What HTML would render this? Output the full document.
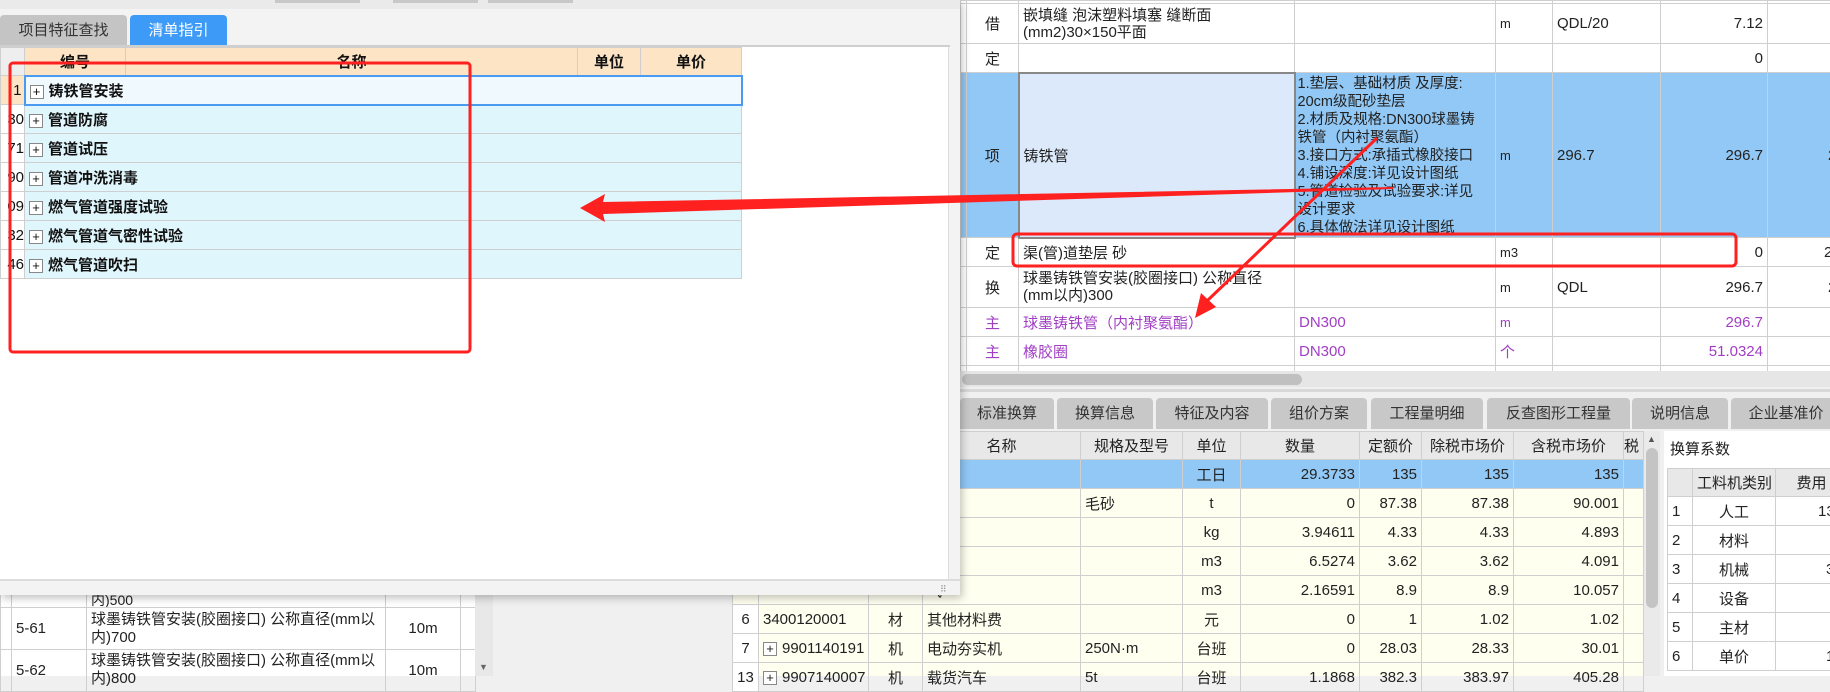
<!DOCTYPE html>
<html><head><meta charset="utf-8"><style>
*{box-sizing:border-box;margin:0;padding:0}
body{width:1830px;height:676px;overflow:hidden;position:relative;background:#f0f0f0;font-family:"Liberation Sans","Noto Sans CJK SC",sans-serif;font-size:15px;color:#222}
.a{position:absolute}
table{border-collapse:collapse;table-layout:fixed;position:absolute}
td{border:1px solid #cfcfcf;padding:0 4px;white-space:nowrap;overflow:hidden;vertical-align:middle}
.r{text-align:right}.c{text-align:center}
.p{color:#a13ec4}
.pl{display:inline-block;width:14px;height:14px;border:1px solid #888;font-size:13px;line-height:11px;text-align:center;background:#fff;vertical-align:middle;margin-right:5px}
</style></head><body>

<!-- top right table -->
<div class="a" style="left:960px;top:0;width:870px;height:372px;background:#fff"></div>
<table style="left:960px;top:0;width:877px">
<colgroup><col style="width:6px"><col style="width:52px"><col style="width:276px"><col style="width:201px"><col style="width:57px"><col style="width:108px"><col style="width:107px"><col style="width:70px"></colgroup>
<tr style="height:3px"><td></td><td></td><td></td><td></td><td></td><td></td><td></td><td></td></tr>
<tr style="height:40px"><td></td><td class="c">借</td><td style="white-space:normal;line-height:17px">嵌填缝 泡沫塑料填塞 缝断面(mm2)30×150平面</td><td></td><td style="font-size:13px">m</td><td>QDL/20</td><td class="r">7.12</td><td></td></tr>
<tr style="height:29px"><td></td><td class="c">定</td><td></td><td></td><td></td><td></td><td class="r">0</td><td></td></tr>
<tr style="height:164px;background:#92c8f5"><td></td><td class="c">项</td><td style="background:#dce9fb;border:2px solid #888">铸铁管</td><td style="white-space:normal;line-height:18px;padding:0 2px;font-size:14.5px;vertical-align:top;padding-top:2px">1.垫层、基础材质 及厚度:<br>20cm级配砂垫层<br>2.材质及规格:DN300球墨铸<br>铁管（内衬聚氨酯）<br>3.接口方式:承插式橡胶接口<br>4.铺设深度:详见设计图纸<br>5.管道检验及试验要求:详见<br>设计要求<br>6.具体做法详见设计图纸</td><td style="font-size:13px">m</td><td>296.7</td><td class="r">296.7</td><td class="r" style="text-align:left;padding-left:60px">2</td></tr>
<tr style="height:29px"><td></td><td class="c">定</td><td>渠(管)道垫层 砂</td><td></td><td style="font-size:13px">m3</td><td></td><td class="r">0</td><td style="padding-left:56px">20</td></tr>
<tr style="height:41px"><td></td><td class="c">换</td><td style="white-space:normal;line-height:17px">球墨铸铁管安装(胶圈接口) 公称直径(mm以内)300</td><td></td><td style="font-size:13px">m</td><td>QDL</td><td class="r">296.7</td><td style="padding-left:60px">2</td></tr>
<tr style="height:29px" class="p"><td></td><td class="c">主</td><td>球墨铸铁管（内衬聚氨酯）</td><td>DN300</td><td style="font-size:13px">m</td><td></td><td class="r">296.7</td><td></td></tr>
<tr style="height:29px" class="p"><td></td><td class="c">主</td><td>橡胶圈</td><td>DN300</td><td>个</td><td></td><td class="r">51.0324</td><td></td></tr>
<tr style="height:6px"><td></td><td></td><td></td><td></td><td></td><td></td><td></td><td></td></tr>
</table>
<div class="a" style="left:960px;top:371px;width:870px;height:16px;background:#e6e6e6"></div>
<div class="a" style="left:962px;top:374px;width:340px;height:11px;background:#c0c0c0;border-radius:6px"></div>
<div class="a" style="left:960px;top:389px;width:870px;height:3px;background:#d8d8d8"></div>

<!-- bottom tabs -->
<div class="a" style="left:960px;top:398px;width:870px;height:31px;color:#333;font-size:15px">
<div class="a" style="left:0;width:94px;height:31px;background:#c8c8c8;border-radius:4px 4px 0 0;text-align:center;line-height:31px">标准换算</div>
<div class="a" style="left:97px;width:96px;height:31px;background:#c8c8c8;border-radius:4px 4px 0 0;text-align:center;line-height:31px">换算信息</div>
<div class="a" style="left:196px;width:112px;height:31px;background:#c8c8c8;border-radius:4px 4px 0 0;text-align:center;line-height:31px">特征及内容</div>
<div class="a" style="left:311px;width:96px;height:31px;background:#c8c8c8;border-radius:4px 4px 0 0;text-align:center;line-height:31px">组价方案</div>
<div class="a" style="left:411px;width:112px;height:31px;background:#c8c8c8;border-radius:4px 4px 0 0;text-align:center;line-height:31px">工程量明细</div>
<div class="a" style="left:527px;width:143px;height:31px;background:#c8c8c8;border-radius:4px 4px 0 0;text-align:center;line-height:31px">反查图形工程量</div>
<div class="a" style="left:672px;width:96px;height:31px;background:#c8c8c8;border-radius:4px 4px 0 0;text-align:center;line-height:31px">说明信息</div>
<div class="a" style="left:771px;width:110px;height:31px;background:#c8c8c8;border-radius:4px 4px 0 0;text-align:center;line-height:31px">企业基准价</div>
</div>

<!-- bottom table -->
<div class="a" style="left:732px;top:431px;width:928px;height:245px;background:#fffff0"></div>
<table style="left:732px;top:431px;width:911px">
<colgroup><col style="width:26px"><col style="width:110px"><col style="width:54px"><col style="width:158px"><col style="width:102px"><col style="width:58px"><col style="width:119px"><col style="width:62px"><col style="width:92px"><col style="width:110px"><col style="width:20px"></colgroup>
<tr style="height:28px;background:#e8e8e8"><td></td><td></td><td></td><td class="c">名称</td><td class="c">规格及型号</td><td class="c">单位</td><td class="c">数量</td><td class="c" style="padding:0">定额价</td><td class="c" style="padding:0">除税市场价</td><td class="c">含税市场价</td><td style="padding:0">税</td></tr>
<tr style="height:29px;background:#92c8f5"><td></td><td></td><td></td><td>人工</td><td></td><td class="c">工日</td><td class="r">29.3733</td><td class="r">135</td><td class="r">135</td><td class="r">135</td><td></td></tr>
<tr style="height:29px"><td></td><td></td><td></td><td></td><td>毛砂</td><td class="c">t</td><td class="r">0</td><td class="r">87.38</td><td class="r">87.38</td><td class="r">90.001</td><td></td></tr>
<tr style="height:29px"><td></td><td></td><td></td><td>油</td><td></td><td class="c">kg</td><td class="r">3.94611</td><td class="r">4.33</td><td class="r">4.33</td><td class="r">4.893</td><td></td></tr>
<tr style="height:29px"><td></td><td></td><td></td><td></td><td></td><td class="c">m3</td><td class="r">6.5274</td><td class="r">3.62</td><td class="r">3.62</td><td class="r">4.091</td><td></td></tr>
<tr style="height:29px"><td></td><td></td><td></td><td>气</td><td></td><td class="c">m3</td><td class="r">2.16591</td><td class="r">8.9</td><td class="r">8.9</td><td class="r">10.057</td><td></td></tr>
<tr style="height:29px"><td class="c" style="background:#fff;padding:0">6</td><td>3400120001</td><td class="c">材</td><td>其他材料费</td><td></td><td class="c">元</td><td class="r">0</td><td class="r">1</td><td class="r">1.02</td><td class="r">1.02</td><td></td></tr>
<tr style="height:29px"><td class="c" style="background:#fff;padding:0">7</td><td><span class="pl">+</span>9901140191</td><td class="c">机</td><td>电动夯实机</td><td>250N·m</td><td class="c">台班</td><td class="r">0</td><td class="r">28.03</td><td class="r">28.33</td><td class="r">30.01</td><td></td></tr>
<tr style="height:29px"><td class="c" style="background:#fff;padding:0">13</td><td><span class="pl">+</span>9907140007</td><td class="c">机</td><td>载货汽车</td><td>5t</td><td class="c">台班</td><td class="r">1.1868</td><td class="r">382.3</td><td class="r">383.97</td><td class="r">405.28</td><td></td></tr>
</table>
<div class="a" style="left:1644px;top:431px;width:16px;height:245px;background:#eaeaea"></div>
<div class="a" style="left:1646px;top:448px;width:12px;height:160px;background:#c4c4c4;border-radius:6px"></div>
<div class="a" style="left:1647px;top:434px;font-size:9px;color:#555">▲</div>

<!-- right panel -->
<div class="a" style="left:1664px;top:431px;width:166px;height:245px;background:#fff"></div>
<div class="a" style="left:1670px;top:438px;font-size:15px">换算系数</div>
<table style="left:1667px;top:468px;width:180px">
<colgroup><col style="width:25px"><col style="width:83px"><col style="width:72px"></colgroup>
<tr style="height:28px;background:#e8e8e8"><td></td><td class="c">工料机类别</td><td class="c">费用</td></tr>
<tr style="height:29px"><td>1</td><td class="c">人工</td><td class="r" style="text-align:left;padding-left:42px">13.</td></tr>
<tr style="height:29px"><td>2</td><td class="c">材料</td><td style="padding-left:58px">0</td></tr>
<tr style="height:29px"><td>3</td><td class="c">机械</td><td style="padding-left:50px">3.</td></tr>
<tr style="height:29px"><td>4</td><td class="c">设备</td><td></td></tr>
<tr style="height:29px"><td>5</td><td class="c">主材</td><td></td></tr>
<tr style="height:29px"><td>6</td><td class="c">单价</td><td style="padding-left:50px">17</td></tr>
</table>

<!-- bottom-left table under popup -->
<div class="a" style="left:0;top:595px;width:493px;height:81px;background:#fff"></div>
<table style="left:0;top:590px;width:475px">
<colgroup><col style="width:11px"><col style="width:75px"><col style="width:299px"><col style="width:75px"><col style="width:15px"></colgroup>
<tr style="height:17px"><td></td><td></td><td style="font-size:14px;vertical-align:bottom;line-height:14px">内)500</td><td></td><td></td></tr>
<tr style="height:42px"><td></td><td>5-61</td><td style="white-space:normal;line-height:18px">球墨铸铁管安装(胶圈接口) 公称直径(mm以内)700</td><td class="c">10m</td><td></td></tr>
<tr style="height:42px"><td></td><td>5-62</td><td style="white-space:normal;line-height:18px;vertical-align:top;padding-top:2px">球墨铸铁管安装(胶圈接口) 公称直径(mm以内)800</td><td class="c">10m</td><td></td></tr>
</table>
<div class="a" style="left:475px;top:595px;width:18px;height:81px;background:#e8e8e8"></div>
<div class="a" style="left:479px;top:662px;font-size:9px;color:#666">▼</div>

<!-- popup -->
<div class="a" style="left:0;top:0;width:960px;height:595px;background:#f3f3f3;box-shadow:2px 3px 8px rgba(0,0,0,.25)">
 <div class="a" style="left:0;top:0;width:960px;height:9px;background:#eaeaea"></div>
 <div class="a" style="left:275px;top:0;width:85px;height:3px;background:#c8c8c8"></div>
 <div class="a" style="left:393px;top:0;width:85px;height:3px;background:#c8c8c8"></div>
 <div class="a" style="left:488px;top:0;width:85px;height:3px;background:#c8c8c8"></div>
 <div class="a" style="left:0;top:15px;width:127px;height:31px;background:#c4c4c4;border-radius:4px 4px 0 0;text-align:center;line-height:31px;color:#333">项目特征查找</div>
 <div class="a" style="left:130px;top:15px;width:97px;height:31px;background:#3d9bf7;border-radius:4px 4px 0 0;text-align:center;line-height:31px;color:#fff">清单指引</div>
 <div class="a" style="left:0;top:45px;width:950px;height:2px;background:#cfcfcf"></div>
 <div class="a" style="left:0;top:47px;width:949px;height:532px;background:#fff;border-right:1px solid #ddd"></div>
 <div class="a" style="left:0;top:579px;width:960px;height:2px;background:#dcdcdc"></div>
 <div class="a" style="left:940px;top:584px;font-size:9px;color:#999">⠿</div>
 <table style="left:0;top:47px;width:741px;font-weight:bold;color:#111">
 <colgroup><col style="width:24px"><col style="width:101px"><col style="width:452px"><col style="width:63px"><col style="width:101px"></colgroup>
 <tr style="height:28px;background:#fde4c4"><td style="background:#eee"></td><td class="c">编号</td><td class="c">名称</td><td class="c">单位</td><td class="c">单价</td></tr>
 <tr style="height:29px;background:#f0f9fd"><td class="r" style="background:#fde4c4;padding:0 2px;font-weight:normal">1</td><td colspan="4" style="border:2px solid #4a9af0"><span class="pl" style="font-weight:normal">+</span>铸铁管安装</td></tr>
 <tr style="height:29px;background:#e0f6fd"><td class="r" style="background:#fff;padding:0;font-weight:normal">30</td><td colspan="4"><span class="pl" style="font-weight:normal">+</span>管道防腐</td></tr>
 <tr style="height:29px;background:#e0f6fd"><td class="r" style="background:#fff;padding:0;font-weight:normal">71</td><td colspan="4"><span class="pl" style="font-weight:normal">+</span>管道试压</td></tr>
 <tr style="height:29px;background:#e0f6fd"><td class="r" style="background:#fff;padding:0;font-weight:normal">90</td><td colspan="4"><span class="pl" style="font-weight:normal">+</span>管道冲洗消毒</td></tr>
 <tr style="height:29px;background:#e0f6fd"><td class="r" style="background:#fff;padding:0;font-weight:normal">09</td><td colspan="4"><span class="pl" style="font-weight:normal">+</span>燃气管道强度试验</td></tr>
 <tr style="height:29px;background:#e0f6fd"><td class="r" style="background:#fff;padding:0;font-weight:normal">32</td><td colspan="4"><span class="pl" style="font-weight:normal">+</span>燃气管道气密性试验</td></tr>
 <tr style="height:29px;background:#e0f6fd"><td class="r" style="background:#fff;padding:0;font-weight:normal">46</td><td colspan="4"><span class="pl" style="font-weight:normal">+</span>燃气管道吹扫</td></tr>
 </table>
</div>

<!-- annotations -->
<svg class="a" style="left:0;top:0" width="1830" height="676">
 <rect x="10" y="63" width="460" height="289" rx="3" fill="none" stroke="#ff2020" stroke-width="3"/>
 <rect x="1013" y="234" width="723" height="32" rx="4" fill="none" stroke="#ff2020" stroke-width="3"/>
 <polygon points="1393,187 1393,189 603,214 605,222 580,208 605,194 603,202" fill="#ff2020"/>
 <line x1="1377" y1="138" x2="1208" y2="300" stroke="#ff2020" stroke-width="3"/>
 <polygon points="1195,318 1201,293 1216,307" fill="#ff2020"/>
</svg>
</body></html>
